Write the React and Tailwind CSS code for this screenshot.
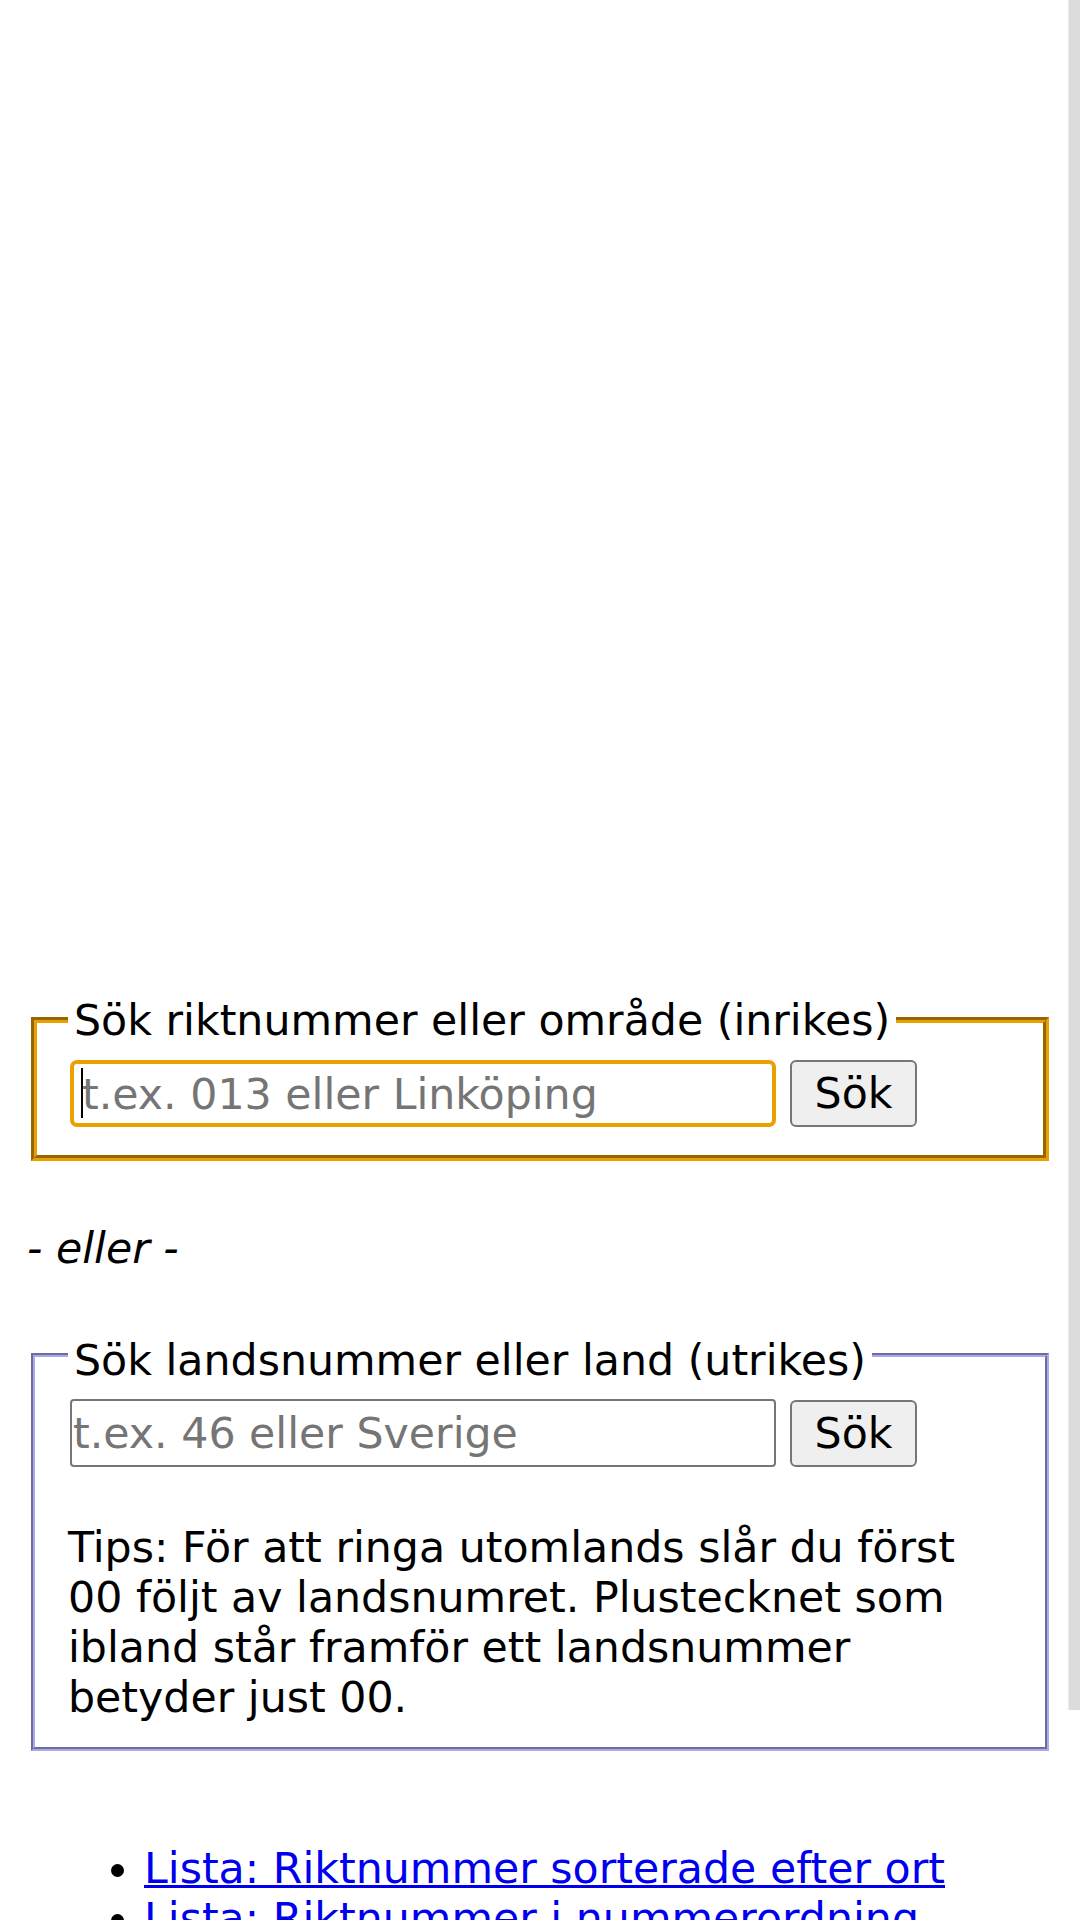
import { useState } from 'react';

const links = [
  'Lista: Riktnummer sorterade efter ort',
  'Lista: Riktnummer i nummerordning',
];

const App = () => {
  const [inrikes, setInrikes] = useState('');
  const [utrikes, setUtrikes] = useState('');

  return (
    <div className="relative min-h-screen bg-white font-['DejaVu_Sans','Verdana',sans-serif] text-[42.7px] leading-[50px] text-black">
      {/* scrollbar thumb */}
      <div className="fixed right-0 top-0 h-[1710px] w-[12px] border-l border-[#ececec] bg-[#dcdcdc]" />

      <div className="px-[27px]">
        {/* empty ad area */}
        <div className="h-[995px]" />

        <form onSubmit={(e) => e.preventDefault()}>
          <fieldset className="mx-[4px] rounded-none border-[6px] border-[#e9a000] pl-[31px] pr-[33px] pb-[28px] pt-[15px] [border-style:groove]">
            <legend className="px-[6px] leading-[50px]">Sök riktnummer eller område (inrikes)</legend>
            <div className="flex items-center gap-[14px]">
              <div className="relative ml-[2px] w-[706px]">
                <input
                  className="block h-[67px] w-full rounded-[7px] border-[4px] border-[#e9a000] bg-white pl-[8px] text-[42.7px] outline-none placeholder:text-[#757575]"
                  placeholder="t.ex. 013 eller Linköping"
                  value={inrikes}
                  onChange={(e) => setInrikes(e.target.value)}
                />
                <span className="absolute left-[11px] top-[8px] h-[50px] w-[2px] bg-black" />
              </div>
              <button className="h-[67px] w-[127px] rounded-[6px] border-2 border-[#767676] bg-[#efefef] text-[42.7px] leading-none">Sök</button>
            </div>
          </fieldset>
        </form>

        <p className="mt-[62px] italic">- eller -</p>

        <form onSubmit={(e) => e.preventDefault()}>
          <fieldset className="mx-[4px] mt-[51px] rounded-none border-[4px] border-[#aaa8ee] pl-[33px] pr-[35px] pb-[25px] pt-[14px] [border-style:groove]">
            <legend className="px-[6px] pt-[11px] leading-[50px]">Sök landsnummer eller land (utrikes)</legend>
            <div className="flex items-center gap-[14px]">
              <input
                className="ml-[2px] block h-[68px] w-[706px] rounded-[4px] border-2 border-[#767676] bg-white pl-[1px] text-[42.7px] outline-none placeholder:text-[#757575]"
                placeholder="t.ex. 46 eller Sverige"
                value={utrikes}
                onChange={(e) => setUtrikes(e.target.value)}
              />
              <button className="h-[67px] w-[127px] rounded-[6px] border-2 border-[#767676] bg-[#efefef] text-[42.7px] leading-none">Sök</button>
            </div>
            <p className="mr-[20px] mt-[55px]">
              Tips: För att ringa utomlands slår du först 00 följt av landsnumret. Plustecknet som ibland står framför ett landsnummer betyder just 00.
            </p>
          </fieldset>
        </form>

        <ul className="mt-[92px] list-disc pl-[117px]">
          {links.map((label) => (
            <li key={label}>
              <a href="#" className="text-[#0000ee] underline decoration-[3px]">{label}</a>
            </li>
          ))}
        </ul>
      </div>
    </div>
  );
};

export default App;
